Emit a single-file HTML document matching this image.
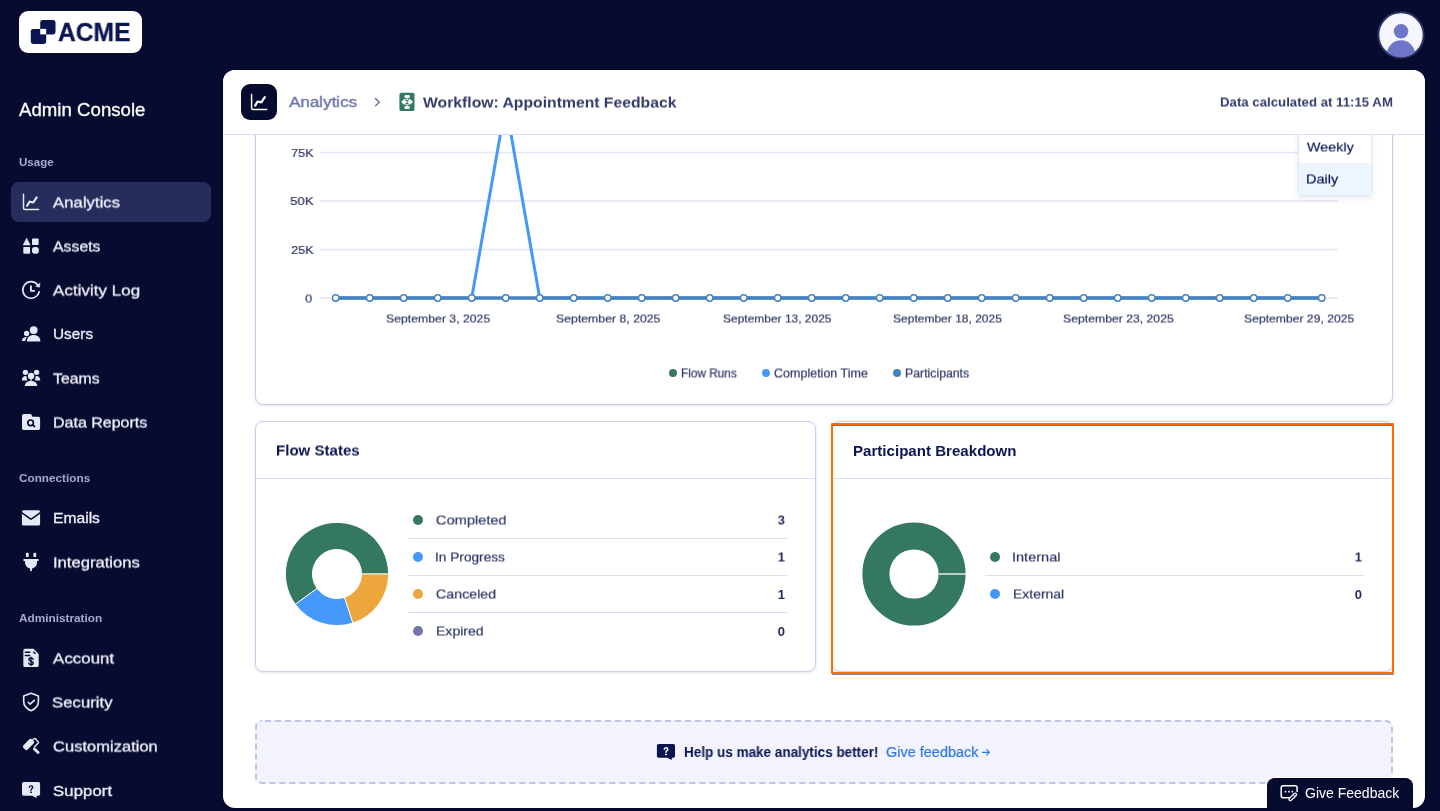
<!DOCTYPE html>
<html lang="en">
<head>
<meta charset="utf-8">
<title>Admin Console - Analytics</title>
<style>
*{box-sizing:border-box;margin:0;padding:0}
html,body{width:1440px;height:811px;overflow:hidden;background:#070b2f;font-family:"Liberation Sans",sans-serif;color:#0a1551}
.abs{position:absolute}
.t{position:absolute;white-space:nowrap;line-height:1;transform-origin:0 50%;will-change:transform}
/* sidebar */
#logo{left:19px;top:11px;width:123px;height:42px;background:#fff;border-radius:9px}
#admin{left:19px;top:100px;font-size:18px;color:#fff;font-weight:400}
.sec{font-size:12px;font-weight:700;color:#a3a9d1;left:19px}
.nav{left:53px;font-size:16px;color:#eff1fc;-webkit-text-stroke:0.3px #eff1fc}
#active{left:11px;top:182px;width:200px;height:40px;border-radius:8px;background:#262d5b}
.ico{position:absolute;left:21px;width:20px;height:20px}
/* main */
#panel{left:223px;top:70px;width:1202px;height:738px;background:#fff;border-radius:12px;overflow:hidden;box-shadow:0 0 0 1px #03062a}
#hdr{left:0;top:0;width:1202px;height:65px;border-bottom:1px solid #dcdff2;background:#fff}
.card{position:absolute;background:#fff;border:1px solid #c8ceed;border-radius:8px;box-shadow:0 1px 3px rgba(37,45,91,.12)}

.ax{font-size:12px;color:#2f3766;-webkit-text-stroke:0.2px #2f3766}
.lg{font-size:14px;color:#2f3766;-webkit-text-stroke:0.2px #2f3766}
.val{font-size:13px;font-weight:700;color:#252d5b;text-align:right;transform-origin:100% 50%}
.ttl{font-size:14.5px;font-weight:700;color:#0a1551}
.dot{position:absolute;width:10px;height:10px;border-radius:50%}
.sep{position:absolute;height:1px;background:#dadef3}
</style>
</head>
<body>
<!-- SIDEBAR -->
<div id="logo" class="abs"></div>
<svg class="abs" style="left:19px;top:11px" width="123" height="42" viewBox="19 11 123 42"><rect x="40.2" y="20" width="15.3" height="14.4" rx="2.4" fill="#0a1551"/><rect x="30.8" y="28.9" width="15.4" height="15.1" rx="2.4" fill="#0a1551"/><rect x="40.2" y="28.9" width="6" height="5.5" fill="#fff"/></svg>
<div class="t" style="left:58px;top:20px;font-size:25px;transform:translate(0px,0px) scaleX(0.985) rotate(0.02deg);font-weight:700;color:#0a1551;-webkit-text-stroke:0.3px #0a1551">ACME</div>
<div class="t" style="left:19px;top:101px;font-size:18.5px;transform:translate(0px,0px) scaleX(1.008) rotate(0.02deg);color:#fff;-webkit-text-stroke:0.3px #fff">Admin Console</div>
<div id="active" class="abs"></div>
<svg class="abs" style="left:18px;top:188px" width="26" height="28" viewBox="18 188 26 28" ><path d="M23.5 194.2V208a1.5 1.5 0 0 0 1.5 1.5H38.6" fill="none" stroke="#e6e8f7" stroke-width="1.5" stroke-linecap="round"/><path d="M27.1 205.7L29.5 201.7L33.2 202.5L36.7 197.4" fill="none" stroke="#e6e8f7" stroke-width="2.2" stroke-linecap="round" stroke-linejoin="round"/></svg>
<svg class="abs" style="left:18px;top:232px" width="26" height="28" viewBox="18 232 26 28" ><g fill="#e6e8f7"><path d="M26.65 238.3L30.2 245H23.1Z" stroke="#e6e8f7" stroke-width="0.6" stroke-linejoin="round"/><rect x="32" y="238.4" width="6.6" height="6.7" rx="0.8"/><rect x="23.3" y="247" width="6.8" height="6.7" rx="0.8"/><rect x="32" y="246.9" width="6.8" height="6.9" rx="2.7"/></g></svg>
<svg class="abs" style="left:18px;top:276px" width="26" height="28" viewBox="18 276 26 28"><path d="M39.2 291.7A8.3 8.3 0 1 1 37.7 284.9" fill="none" stroke="#e6e8f7" stroke-width="1.6" stroke-linecap="round"/><path d="M40 283.3L35.7 286.3L39.5 287.3Z" fill="#e6e8f7" stroke="#e6e8f7" stroke-width="0.5" stroke-linejoin="round"/><path d="M30.95 285.5V290.85H34.9" fill="none" stroke="#e6e8f7" stroke-width="1.8" stroke-linejoin="round"/></svg>
<svg class="abs" style="left:18px;top:320px" width="26" height="28" viewBox="18 320 26 28" ><g fill="#e6e8f7"><circle cx="33.7" cy="330.2" r="3.85"/><path d="M27 341.4V340.6C27 337.3 29.7 334.9 33.65 334.9S40.3 337.3 40.3 340.6V341.4Z"/><circle cx="26.6" cy="333.5" r="2.65"/><path d="M22 341V340.4C22 338.3 23.7 336.9 26.3 336.9H27.2C25.9 337.9 25.4 339.3 25.4 341Z"/></g></svg>
<svg class="abs" style="left:18px;top:364px" width="26" height="28" viewBox="18 364 26 28" ><g fill="#e6e8f7"><circle cx="25.4" cy="372.3" r="2.65"/><circle cx="36.6" cy="372.3" r="2.65"/><circle cx="31.05" cy="376.1" r="3.25"/><rect x="30.1" y="379" width="1.9" height="2.2" opacity=".65"/><path d="M24.9 386.1V385.5C24.9 382.7 27.3 380.9 31 380.9S37.1 382.7 37.1 385.5V386.1Z"/><path d="M21.9 380.6V380C21.9 377.6 23.3 375.9 25.6 375.9C26.3 375.9 26.6 376.3 26.6 377C26.6 378.4 27 379.6 27.3 380.6Z"/><path d="M40.2 380.6V380C40.2 377.6 38.8 375.9 36.5 375.9C35.8 375.9 35.5 376.3 35.5 377C35.5 378.4 35.1 379.6 34.8 380.6Z"/></g></svg>
<svg class="abs" style="left:18px;top:408px" width="26" height="28" viewBox="18 408 26 28" ><path d="M22 415.6A1.6 1.6 0 0 1 23.6 414H30.4A1.2 1.2 0 0 1 31.4 414.6L32.4 416.8H38.5A1.6 1.6 0 0 1 40.1 418.4V428.3A1.6 1.6 0 0 1 38.5 429.9H23.6A1.6 1.6 0 0 1 22 428.3Z" fill="#e6e8f7"/><circle cx="30.6" cy="422.8" r="2.8" fill="none" stroke="#070b2f" stroke-width="1.7"/><path d="M32.7 424.9L34.5 426.5" stroke="#070b2f" stroke-width="1.7" stroke-linecap="round"/></svg>
<svg class="abs" style="left:18px;top:504px" width="26" height="28" viewBox="18 504 26 28" ><rect x="21.9" y="510.2" width="18.2" height="15.4" rx="1.7" fill="#e6e8f7"/><path d="M21.6 512.7L30 518.7A1.7 1.7 0 0 0 32 518.7L40.4 512.7" fill="none" stroke="#070b2f" stroke-width="1.5"/></svg>
<svg class="abs" style="left:18px;top:548px" width="26" height="28" viewBox="18 548 26 28" ><g fill="#e6e8f7"><rect x="25.9" y="552.8" width="2.8" height="4.3" rx="0.9"/><rect x="33.4" y="552.8" width="2.8" height="4.3" rx="0.9"/><rect x="23.2" y="558.9" width="15.6" height="2.1" rx="1"/><path d="M25.1 560.5H37V562.4C37 566 34.4 568.4 31.05 568.4S25.1 566 25.1 562.4Z"/><rect x="30.1" y="567.5" width="1.9" height="3.5" rx="0.3"/></g></svg>
<svg class="abs" style="left:18px;top:644px" width="26" height="28" viewBox="18 644 26 28" ><path d="M23.35 650.5A1.7 1.7 0 0 1 25.05 648.8H33.5L38.7 654V665.4A1.7 1.7 0 0 1 37 667.1H25.05A1.7 1.7 0 0 1 23.35 665.4Z" fill="#e6e8f7"/><path d="M33.4 650.8V653.1A0.6 0.6 0 0 0 34 653.7H36.3Z" fill="#070b2f"/><path d="M25.3 652.2H29.7M25.3 655.4H29.7" stroke="#070b2f" stroke-width="1.5" stroke-linecap="round"/><path d="M33.2 659.4C33 658.5 32.2 658 31 658C29.7 658 28.9 658.7 28.9 659.6C28.9 661.9 33.3 660.6 33.3 663C33.3 664 32.4 664.7 31 664.7C29.6 664.7 28.8 664 28.6 663.1M31 657.2V665.4" fill="none" stroke="#070b2f" stroke-width="1.3" stroke-linecap="round"/></svg>
<svg class="abs" style="left:18px;top:688px" width="26" height="28" viewBox="18 688 26 28" ><path d="M31.05 693.2L23.7 696.1V701.5C23.7 705.8 26.6 708.8 31.05 710.8C35.5 708.8 38.4 705.8 38.4 701.5V696.1Z" fill="none" stroke="#e6e8f7" stroke-width="1.6" stroke-linejoin="round"/><path d="M28.2 702.3L30.1 704.2L34.3 700.4" fill="none" stroke="#e6e8f7" stroke-width="1.6" stroke-linecap="round" stroke-linejoin="round"/></svg>
<svg class="abs" style="left:18px;top:732px" width="26" height="28" viewBox="18 732 26 28" ><rect x="-6.1" y="-3" width="12.2" height="6" rx="1.9" transform="translate(28.55 744.45) rotate(-45.5)" fill="#e6e8f7"/><path d="M32.9 739.4L34.6 738.6A0.8 0.8 0 0 1 35.5 738.8L38.3 741.9A0.8 0.8 0 0 1 38.3 743L34.3 746.9" fill="none" stroke="#e6e8f7" stroke-width="1.4" stroke-linecap="round"/><path d="M34.4 748.9L38.1 752.6" stroke="#e6e8f7" stroke-width="2.8" stroke-linecap="round"/></svg>
<svg class="abs" style="left:18px;top:776px" width="26" height="28" viewBox="18 776 26 28" ><path d="M22 783.6A1.6 1.6 0 0 1 23.6 782H38.5A1.6 1.6 0 0 1 40.1 783.6V794.1A1.6 1.6 0 0 1 38.5 795.7H36.7L36.4 798.1L32.2 795.7H23.6A1.6 1.6 0 0 1 22 794.1Z" fill="#e6e8f7"/><path d="M29.3 787.4C29.5 786.3 30.2 785.8 31.1 785.8C32.1 785.8 32.8 786.4 32.8 787.3C32.8 788.6 31 788.6 31 790.3" fill="none" stroke="#070b2f" stroke-width="1.25" stroke-linecap="round"/><rect x="30.1" y="791.6" width="1.9" height="1.3" fill="#070b2f"/></svg>
<svg class="abs" style="left:1376px;top:10px" width="50" height="50" viewBox="1376 10 50 50"><defs><clipPath id="avc"><circle cx="1401" cy="35" r="22.2"/></clipPath></defs><circle cx="1401" cy="35" r="22.7" fill="#f5f6fe" stroke="#2c3266" stroke-width="2"/><g clip-path="url(#avc)" fill="#6f76c7"><circle cx="1401.05" cy="31.3" r="7.25"/><circle cx="1401" cy="54.45" r="14.1"/></g></svg>
<div class="t sec" style="left:19px;top:157px;font-size:11.3px;transform:translate(0px,0px) scaleX(1.024) rotate(0.02deg)">Usage</div>
<div class="t nav" style="left:53px;top:194px;font-size:15.4px;transform:translate(0px,0.5px) scaleX(1.088) rotate(0.02deg)">Analytics</div>
<div class="t nav" style="left:53px;top:238px;font-size:15.4px;transform:translate(0px,0.5px) scaleX(1.028) rotate(0.02deg)">Assets</div>
<div class="t nav" style="left:53px;top:282px;font-size:15.4px;transform:translate(0px,0.5px) scaleX(1.107) rotate(0.02deg)">Activity Log</div>
<div class="t nav" style="left:53px;top:326px;font-size:15.4px;transform:translate(0px,0px) scaleX(0.997) rotate(0.02deg)">Users</div>
<div class="t nav" style="left:53px;top:370px;font-size:15.4px;transform:translate(0px,0.5px) scaleX(1.026) rotate(0.02deg)">Teams</div>
<div class="t nav" style="left:53px;top:414px;font-size:15.4px;transform:translate(0px,0.5px) scaleX(1.040) rotate(0.02deg)">Data Reports</div>
<div class="t sec" style="left:19px;top:473px;font-size:11.3px;transform:translate(0px,0px) scaleX(1.041) rotate(0.02deg)">Connections</div>
<div class="t nav" style="left:53px;top:510px;font-size:15.4px;transform:translate(0px,0px) scaleX(1.016) rotate(0.02deg)">Emails</div>
<div class="t nav" style="left:53px;top:554px;font-size:15.4px;transform:translate(0px,0.5px) scaleX(1.079) rotate(0.02deg)">Integrations</div>
<div class="t sec" style="left:19px;top:613px;font-size:11.3px;transform:translate(0px,0px) scaleX(1.043) rotate(0.02deg)">Administration</div>
<div class="t nav" style="left:53px;top:650px;font-size:15.4px;transform:translate(0px,0.5px) scaleX(1.099) rotate(0.02deg)">Account</div>
<div class="t nav" style="left:52px;top:694px;font-size:15.4px;transform:translate(0px,0.5px) scaleX(1.088) rotate(0.02deg)">Security</div>
<div class="t nav" style="left:53px;top:738px;font-size:15.4px;transform:translate(0px,0.5px) scaleX(1.074) rotate(0.02deg)">Customization</div>
<div class="t nav" style="left:53px;top:783px;font-size:15.4px;transform:translate(0px,0px) scaleX(1.094) rotate(0.02deg)">Support</div>
<!-- MAIN PANEL -->
<div id="panel" class="abs">
  <!-- chart card -->
  <div class="card" id="chartcard" style="left:32px;top:-20px;width:1138px;height:355px"></div>
  <svg class="abs" style="left:0;top:64px" width="1201" height="280" viewBox="223 134 1201 280">
    <g stroke="#e3e5f5" stroke-width="1.5">
      <line x1="320" x2="1338" y1="152.5" y2="152.5"/>
      <line x1="320" x2="1338" y1="201" y2="201"/>
      <line x1="320" x2="1338" y1="249.5" y2="249.5"/>
      <line x1="320" x2="1338" y1="298" y2="298"/>
    </g>
    <polyline fill="none" stroke="#4598f8" stroke-width="3" stroke-linejoin="round" points="335.7,298 369.7,298 403.7,298 437.7,298 471.7,298 505.7,104 539.7,298 573.7,298 1321.7,298"/>
    <line x1="335.7" x2="1321.7" y1="298" y2="298" stroke="#4682bf" stroke-width="3.5"/>
    <g fill="#fff" stroke="#4682bf" stroke-width="1.4" id="pts"><circle cx="335.7" cy="298" r="3.2"/><circle cx="369.7" cy="298" r="3.2"/><circle cx="403.7" cy="298" r="3.2"/><circle cx="437.7" cy="298" r="3.2"/><circle cx="471.7" cy="298" r="3.2"/><circle cx="505.7" cy="298" r="3.2"/><circle cx="539.7" cy="298" r="3.2"/><circle cx="573.7" cy="298" r="3.2"/><circle cx="607.7" cy="298" r="3.2"/><circle cx="641.7" cy="298" r="3.2"/><circle cx="675.7" cy="298" r="3.2"/><circle cx="709.7" cy="298" r="3.2"/><circle cx="743.7" cy="298" r="3.2"/><circle cx="777.7" cy="298" r="3.2"/><circle cx="811.7" cy="298" r="3.2"/><circle cx="845.7" cy="298" r="3.2"/><circle cx="879.7" cy="298" r="3.2"/><circle cx="913.7" cy="298" r="3.2"/><circle cx="947.7" cy="298" r="3.2"/><circle cx="981.7" cy="298" r="3.2"/><circle cx="1015.7" cy="298" r="3.2"/><circle cx="1049.7" cy="298" r="3.2"/><circle cx="1083.7" cy="298" r="3.2"/><circle cx="1117.7" cy="298" r="3.2"/><circle cx="1151.7" cy="298" r="3.2"/><circle cx="1185.7" cy="298" r="3.2"/><circle cx="1219.7" cy="298" r="3.2"/><circle cx="1253.7" cy="298" r="3.2"/><circle cx="1287.7" cy="298" r="3.2"/><circle cx="1321.7" cy="298" r="3.2"/></g>
  </svg>
  <div class="t ax" style="left:68px;top:78px;font-size:11.2px;transform:translate(0px,0px) scaleX(1.132) rotate(0.02deg)">75K</div>
  <div class="t ax" style="left:67px;top:126px;font-size:11.2px;transform:translate(0px,0px) scaleX(1.188) rotate(0.02deg)">50K</div>
  <div class="t ax" style="left:68px;top:175px;font-size:11.2px;transform:translate(0px,0px) scaleX(1.136) rotate(0.02deg)">25K</div>
  <div class="t ax" style="left:82px;top:223px;font-size:11.2px;transform:translate(0px,0.5px) scaleX(1.132) rotate(0.02deg)">0</div>
  <div class="t ax" style="left:163px;top:242px;font-size:11.7px;transform:translate(0px,0.5px) scaleX(1.048) rotate(0.02deg)">September 3, 2025</div>
  <div class="t ax" style="left:333px;top:242px;font-size:11.7px;transform:translate(0px,0.5px) scaleX(1.050) rotate(0.02deg)">September 8, 2025</div>
  <div class="t ax" style="left:500px;top:242px;font-size:11.7px;transform:translate(0px,0.5px) scaleX(1.024) rotate(0.02deg)">September 13, 2025</div>
  <div class="t ax" style="left:670px;top:242px;font-size:11.7px;transform:translate(0px,0.5px) scaleX(1.028) rotate(0.02deg)">September 18, 2025</div>
  <div class="t ax" style="left:840px;top:242px;font-size:11.7px;transform:translate(0px,0.5px) scaleX(1.045) rotate(0.02deg)">September 23, 2025</div>
  <div class="t ax" style="left:1021px;top:242px;font-size:11.7px;transform:translate(0px,0.5px) scaleX(1.040) rotate(0.02deg)">September 29, 2025</div>
  <div class="dot" style="left:446px;top:299px;width:8px;height:8px;background:#337a60"></div>
  <div class="t ax" style="left:458px;top:297px;font-size:12px;transform:translate(0px,0.5px) scaleX(0.984) rotate(0.02deg)">Flow Runs</div>
  <div class="dot" style="left:539px;top:299px;width:8px;height:8px;background:#4499fb"></div>
  <div class="t ax" style="left:551px;top:297px;font-size:12px;transform:translate(0px,0.5px) scaleX(1.042) rotate(0.02deg)">Completion Time</div>
  <div class="dot" style="left:670px;top:299px;width:8px;height:8px;background:#4682bf"></div>
  <div class="t ax" style="left:682px;top:297px;font-size:12px;transform:translate(0px,0.5px) scaleX(1.023) rotate(0.02deg)">Participants</div>
  <div class="abs" id="dd" style="left:1075px;top:50px;width:74px;height:76px;background:#fff;border:1px solid #e3e5f5;border-radius:4px;box-shadow:0 2px 6px rgba(37,45,91,.11);overflow:hidden">
    <div class="abs" style="left:0;top:42px;width:74px;height:34px;background:#edf5ff"></div>
    <div class="t" style="left:8px;top:19px;font-size:13.2px;transform:translate(0px,0.5px) scaleX(1.088) rotate(0.02deg);color:#0a1551;-webkit-text-stroke:0.15px #0a1551">Weekly</div>
    <div class="t" style="left:7px;top:51px;font-size:13.2px;transform:translate(0px,0.5px) scaleX(1.103) rotate(0.02deg);color:#0a1551;-webkit-text-stroke:0.15px #0a1551">Daily</div>
  </div>
  <div class="card" style="left:32px;top:351px;width:561px;height:251px"></div>
  <div class="sep" style="left:33px;top:408px;width:559px;background:#dcdff2"></div>
  <div class="t ttl" style="left:53px;top:373px;font-size:14px;transform:translate(0px,0.5px) scaleX(1.076) rotate(0.02deg)">Flow States</div>
  <svg class="abs" style="left:58px;top:447.7px" width="112" height="112" viewBox="-56 -56 112 112" id="donut1"><path d="M51.60 -0.00A51.6 51.6 0 1 0 -41.75 30.33L-19.90 14.46A24.6 24.6 0 1 1 24.60 -0.00Z" fill="#347860" stroke="#fff" stroke-width="0.9" stroke-linejoin="round"/><path d="M-41.75 30.33A51.6 51.6 0 0 0 15.95 49.07L7.60 23.40A24.6 24.6 0 0 1 -19.90 14.46Z" fill="#4499fb" stroke="#fff" stroke-width="0.9" stroke-linejoin="round"/><path d="M15.95 49.07A51.6 51.6 0 0 0 51.60 0.00L24.60 0.00A24.6 24.6 0 0 1 7.60 23.40Z" fill="#eca63c" stroke="#fff" stroke-width="0.9" stroke-linejoin="round"/></svg>
  <div class="dot" style="left:190px;top:445px;background:#337a60"></div>
  <div class="t lg" style="left:213px;top:443px;font-size:13px;transform:translate(0px,0.5px) scaleX(1.122) rotate(0.02deg)">Completed</div>
  <div class="t val" style="left:532px;top:443px;width:30px;transform:translate(0px,0.5px) scaleX(1) rotate(0.02deg)">3</div>
  <div class="sep" style="left:185px;top:468px;width:379px"></div>
  <div class="dot" style="left:190px;top:482px;background:#4399fb"></div>
  <div class="t lg" style="left:212px;top:480px;font-size:13px;transform:translate(0px,0.5px) scaleX(1.052) rotate(0.02deg)">In Progress</div>
  <div class="t val" style="left:532px;top:480px;width:30px;transform:translate(0px,0.5px) scaleX(1) rotate(0.02deg)">1</div>
  <div class="sep" style="left:185px;top:505px;width:379px"></div>
  <div class="dot" style="left:190px;top:519px;background:#eda73e"></div>
  <div class="t lg" style="left:213px;top:517px;font-size:13px;transform:translate(0px,0.5px) scaleX(1.094) rotate(0.02deg)">Canceled</div>
  <div class="t val" style="left:532px;top:518px;width:30px;transform:translate(0px,0px) scaleX(1) rotate(0.02deg)">1</div>
  <div class="sep" style="left:185px;top:542px;width:379px"></div>
  <div class="dot" style="left:190px;top:556px;background:#7276a8"></div>
  <div class="t lg" style="left:213px;top:554px;font-size:13px;transform:translate(0px,0.5px) scaleX(1.081) rotate(0.02deg)">Expired</div>
  <div class="t val" style="left:532px;top:555px;width:30px;transform:translate(0px,0px) scaleX(1) rotate(0.02deg)">0</div>
  <div class="card" style="left:609px;top:351px;width:561px;height:251px"></div>
  <div class="sep" style="left:611px;top:408px;width:558px;background:#dcdff2"></div>
  <div class="t ttl" style="left:630px;top:374px;font-size:14px;transform:translate(0px,0px) scaleX(1.078) rotate(0.02deg)">Participant Breakdown</div>
  <svg class="abs" style="left:635px;top:447.9px" width="112" height="112" viewBox="-56 -56 112 112" id="donut2"><circle r="38.1" fill="none" stroke="#347860" stroke-width="27.0"/><line x1="24.6" x2="52.1" y1="0" y2="0" stroke="#fff" stroke-width="1.3"/></svg>
  <div class="dot" style="left:767px;top:482px;background:#337a60"></div>
  <div class="t lg" style="left:789px;top:480px;font-size:13px;transform:translate(0px,0.5px) scaleX(1.118) rotate(0.02deg)">Internal</div>
  <div class="t val" style="left:1109px;top:480px;width:30px;transform:translate(0px,0.5px) scaleX(1) rotate(0.02deg)">1</div>
  <div class="sep" style="left:762px;top:505px;width:379px"></div>
  <div class="dot" style="left:767px;top:519px;background:#4399fb"></div>
  <div class="t lg" style="left:790px;top:517px;font-size:13px;transform:translate(0px,0.5px) scaleX(1.072) rotate(0.02deg)">External</div>
  <div class="t val" style="left:1109px;top:518px;width:30px;transform:translate(0px,0px) scaleX(1) rotate(0.02deg)">0</div>
  <div class="abs" style="left:610px;top:355px;width:559px;height:1px;background:rgba(60,64,80,.75)"></div>
  <div class="abs" style="left:608.5px;top:604px;width:562.5px;height:1px;background:rgba(60,64,80,.6)"></div>
  <div class="abs" id="hl" style="left:608px;top:353px;width:563px;height:251px;border:2px solid #ff6d00;border-radius:1px"></div>
  <div class="abs" id="banner" style="left:32px;top:650px;width:1138px;height:64px;background:#f3f3fe;border-radius:7px"></div>
  <svg class="abs" style="left:32px;top:650px" width="1138" height="64"><rect x="1" y="1" width="1136" height="62" rx="6" fill="none" stroke="#bfc4e8" stroke-width="2" stroke-dasharray="6 4" stroke-dashoffset="-3"/></svg>
  <div class="t" style="left:461px;top:676px;font-size:13.8px;transform:translate(0px,0px) scaleX(0.979) rotate(0.02deg);font-weight:700;color:#0a1551">Help us make analytics better!</div>
  <div class="t" style="left:663px;top:676px;font-size:13.8px;transform:translate(0px,0px) scaleX(1.048) rotate(0.02deg);color:#2c79e0;-webkit-text-stroke:0.2px #2c79e0">Give feedback</div>
  <svg class="abs" style="left:432px;top:672px" width="22" height="20" viewBox="655 742 22 20"><path d="M656.9 745.5A1.6 1.6 0 0 1 658.5 743.9H673.4A1.6 1.6 0 0 1 675 745.5V756.1A1.6 1.6 0 0 1 673.4 757.7H672.1L671.4 760L667.3 757.7H658.5A1.6 1.6 0 0 1 656.9 756.1Z" fill="#0a1551"/><path d="M664.2 749.3C664.4 748.2 665.1 747.7 666 747.7C667.1 747.7 667.8 748.3 667.8 749.3C667.8 750.6 666 750.7 666 752.3" fill="none" stroke="#fff" stroke-width="1.4" stroke-linecap="round"/><rect x="665" y="753.7" width="2" height="1.4" fill="#fff"/></svg>
  <svg class="abs" style="left:757px;top:676px" width="12" height="12" viewBox="980 746 12 12"><path d="M982.4 752.4H989.4M986.6 749.6L989.5 752.4L986.6 755.2" fill="none" stroke="#2c79e0" stroke-width="1.1" stroke-linecap="round" stroke-linejoin="round"/></svg>
  <div id="hdr" class="abs"></div>
  <div class="abs" id="hico" style="left:18px;top:14px;width:36px;height:36px;border-radius:9px;background:#070b2f"></div>
  <svg class="abs" id="hsvg" style="left:18px;top:14px" width="36" height="36" viewBox="241 84 36 36"><path d="M251.6 94.4V108a1.5 1.5 0 0 0 1.5 1.5H266.7" fill="none" stroke="#fff" stroke-width="1.5" stroke-linecap="round"/><path d="M255.2 105.6L257.6 101.5L261.3 102.3L264.8 97.2" fill="none" stroke="#fff" stroke-width="2.2" stroke-linecap="round" stroke-linejoin="round"/></svg>
  <svg class="abs" style="left:149px;top:24px" width="12" height="16" viewBox="372 94 12 16"><path d="M375.6 98.6L379.3 102.2L375.6 105.8" fill="none" stroke="#6c73a8" stroke-width="1.5" stroke-linecap="round" stroke-linejoin="round"/></svg>
  <svg class="abs" style="left:175px;top:21px" width="18" height="22" viewBox="398 91 18 22"><rect x="399.4" y="92.8" width="15.1" height="18.3" rx="2.2" fill="#2f7a60"/><g fill="#fff"><rect x="404.4" y="95.1" width="5.4" height="2.9" rx="1.3"/><rect x="404.4" y="105.9" width="5.4" height="3.1" rx="1.3"/><path d="M401.1 101.9L403.9 99.2H410.2L413 101.9L410.2 104.6H403.9Z"/><rect x="406.6" y="97.6" width="1" height="2"/><rect x="406.6" y="104.4" width="1" height="2"/></g><path d="M405.2 100.3H408.9M407.05 100.3V103.5M405.6 103.5H408.5" stroke="#2f7a60" stroke-width="1" fill="none"/></svg>
  
  <div class="t" style="left:66px;top:25px;font-size:14.9px;transform:translate(0px,0px) scaleX(1.141) rotate(0.02deg);color:#6c73a8;-webkit-text-stroke:0.35px #6c73a8">Analytics</div>
  <div class="t" style="left:200px;top:25px;font-size:14.4px;transform:translate(0px,0.5px) scaleX(1.093) rotate(0.02deg);font-weight:700;color:#343c6a">Workflow: Appointment Feedback</div>
  <div class="t" style="left:997px;top:26px;font-size:12.8px;transform:translate(0px,0.5px) scaleX(1.033) rotate(0.02deg);font-weight:700;color:#343c6a">Data calculated at 11:15 AM</div>
</div>
<!-- FEEDBACK BUTTON -->
<div class="abs" style="left:1266px;top:777px;width:148px;height:31px;background:#fff;border-radius:9px 9px 0 0"></div>
<div class="abs" id="fbtn" style="left:1267px;top:778px;width:146px;height:33px;background:#070b2f;border-radius:8px 8px 0 0;box-shadow:0 0 0 1px rgba(1,4,38,.5) inset"></div>
<svg class="abs" style="left:1278px;top:782px" width="24" height="22" viewBox="1278 782 24 22"><path d="M1289.5 797.7H1283.2A2 2 0 0 1 1281.2 795.7V787.7A2 2 0 0 1 1283.2 785.7H1295.1A2 2 0 0 1 1297.1 787.7V791.5" fill="none" stroke="#fff" stroke-width="1.5" stroke-linecap="round"/><g fill="#fff"><circle cx="1285.5" cy="791.7" r="0.85"/><circle cx="1288.9" cy="791.7" r="0.85"/><circle cx="1292.3" cy="791.7" r="0.85"/></g><path d="M1290.3 799.3L1295.2 794.5" stroke="#fff" stroke-width="3.9" stroke-linecap="round"/><path d="M1290.4 799.2L1295.1 794.6" stroke="#070b2f" stroke-width="1.5" stroke-linecap="round"/><path d="M1293.2 794.6L1295.2 796.6" stroke="#fff" stroke-width="1"/></svg>
<div class="t" style="left:1305px;top:787px;font-size:13.8px;color:#fff;transform:translate(0px,0px) scaleX(1.016) rotate(0.02deg)">Give Feedback</div>
</body>
</html>
